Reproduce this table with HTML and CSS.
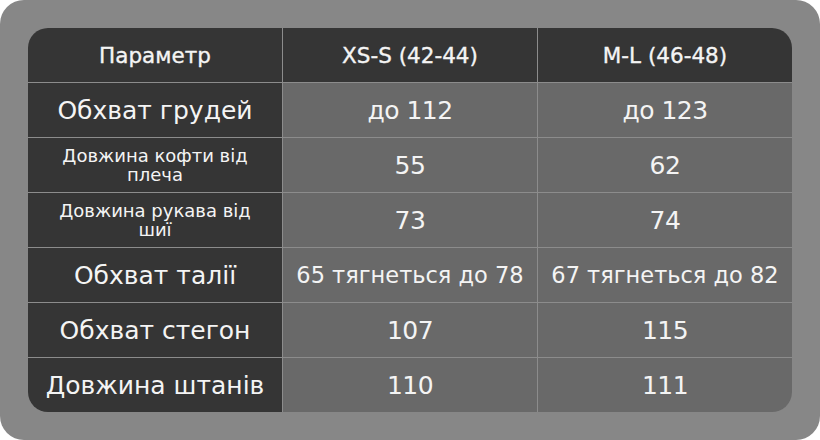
FILE: index.html
```html
<!DOCTYPE html>
<html lang="uk">
<head>
<meta charset="utf-8">
<link rel="stylesheet" href="styles.css">
</head>
<body>
<div class="panel">
  <div class="table">
    <div class="cell head">Параметр</div>
    <div class="cell head">XS-S (42-44)</div>
    <div class="cell head">M-L (46-48)</div>

    <div class="cell label">Обхват грудей</div>
    <div class="cell val">до 112</div>
    <div class="cell val">до 123</div>

    <div class="cell label small">Довжина кофти від<br>плеча</div>
    <div class="cell val">55</div>
    <div class="cell val">62</div>

    <div class="cell label small">Довжина рукава від<br>шиї</div>
    <div class="cell val">73</div>
    <div class="cell val">74</div>

    <div class="cell label">Обхват талії</div>
    <div class="cell val mid">65 тягнеться до 78</div>
    <div class="cell val mid">67 тягнеться до 82</div>

    <div class="cell label">Обхват стегон</div>
    <div class="cell val">107</div>
    <div class="cell val">115</div>

    <div class="cell label">Довжина штанів</div>
    <div class="cell val">110</div>
    <div class="cell val">111</div>
  </div>
</div>
</body>
</html>
```

FILE: styles.css
```css
html, body {
  margin: 0;
  padding: 0;
  background: #ffffff;
}

body {
  font-family: "DejaVu Sans", "Liberation Sans", sans-serif;
  color: #f4f4f4;
}

.panel {
  width: 820px;
  height: 440px;
  box-sizing: border-box;
  padding: 28px;
  background: #878787;
  border-radius: 24px;
}

.table {
  display: grid;
  grid-template-columns: 254px 254px 254px;
  grid-template-rows: repeat(7, 1fr);
  gap: 1px;
  width: 764px;
  height: 384px;
  background: #8c8c8c;
  border-radius: 20px;
  overflow: hidden;
}

.cell {
  display: flex;
  align-items: center;
  justify-content: center;
  text-align: center;
  background: #696969;
  font-size: 25px;
}

.head {
  background: #353535;
  font-size: 21.5px;
  -webkit-text-stroke: 0.35px #f4f4f4;
}

.label {
  background: #353535;
}

.small {
  font-size: 18px;
  line-height: 19px;
}

.mid {
  font-size: 22.5px;
}

.val {
  letter-spacing: -0.5px;
}

.val.mid {
  letter-spacing: 0;
}
```
